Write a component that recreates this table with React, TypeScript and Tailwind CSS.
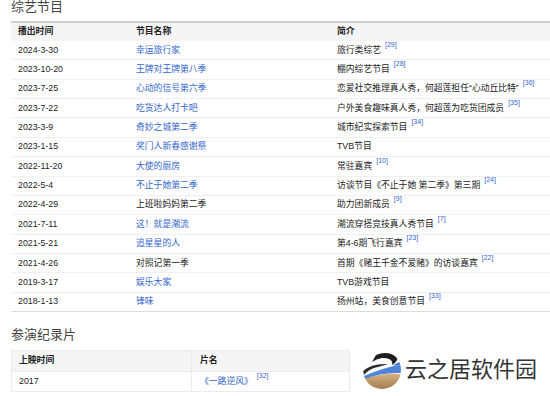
import React from "react";

const FONT = { fontFamily: '"Liberation Sans", "Noto Sans CJK SC", sans-serif' };

type Show = { date: string; name: string; link: boolean; note: string; ref?: string };

const shows: Show[] = [
  { date: "2024-3-30", name: "幸运旅行家", link: true, note: "旅行类综艺", ref: "29" },
  { date: "2023-10-20", name: "王牌对王牌第八季", link: true, note: "棚内综艺节目", ref: "28" },
  { date: "2023-7-25", name: "心动的信号第六季", link: true, note: "恋爱社交推理真人秀，何超莲担任“心动丘比特”", ref: "36" },
  { date: "2023-7-22", name: "吃货达人打卡吧", link: true, note: "户外美食趣味真人秀，何超莲为吃货团成员", ref: "35" },
  { date: "2023-3-9", name: "奇妙之城第二季", link: true, note: "城市纪实探索节目", ref: "34" },
  { date: "2023-1-15", name: "奖门人新春感谢祭", link: true, note: "TVB节目" },
  { date: "2022-11-20", name: "大使的厨房", link: true, note: "常驻嘉宾", ref: "10" },
  { date: "2022-5-4", name: "不止于她第二季", link: true, note: "访谈节目《不止于她 第二季》第三期", ref: "24" },
  { date: "2022-4-29", name: "上班啦妈妈第二季", link: false, note: "助力团新成员", ref: "9" },
  { date: "2021-7-11", name: "这！就是潮流", link: true, note: "潮流穿搭竞技真人秀节目", ref: "7" },
  { date: "2021-5-21", name: "追星星的人", link: true, note: "第4-6期飞行嘉宾", ref: "23" },
  { date: "2021-4-26", name: "对照记第一季", link: false, note: "首期《赌王千金不爱赌》的访谈嘉宾", ref: "22" },
  { date: "2019-3-17", name: "娱乐大家", link: true, note: "TVB游戏节目" },
  { date: "2018-1-13", name: "锋味", link: true, note: "扬州站，美食创意节目", ref: "33" },
];

function Ref({ n }: { n: string }) {
  return <sup className="ml-[4px] relative -top-[3px] text-[7px] text-[#36c] align-top leading-none">[{n}]</sup>;
}

function Logo() {
  return (
    <svg width="40" height="42" viewBox="0 0 40 42">
      <defs>
        <clipPath id="ball">
          <circle cx="20" cy="21" r="19" />
        </clipPath>
        <linearGradient id="tan" x1="0" y1="0" x2="0" y2="1">
          <stop offset="0" stopColor="#d6b283" />
          <stop offset="1" stopColor="#9a7446" />
        </linearGradient>
      </defs>
      <g clipPath="url(#ball)">
        <path d="M0 30 Q18 24 40 25 L40 42 L0 42 Z" fill="url(#tan)" />
        <path d="M2 27 Q20 19 40 15 L40 24 Q20 23 2 30 Z" fill="#4f84d6" />
        <path d="M14 6 Q26 1 36 9 Q34 14 30 16 Q32 9 20 9 Q14 10 10 13 Z" fill="#1e1e1e" />
        <path d="M1 22 Q10 14 26 15 Q20 17 12 19 Q6 21 2 26 Z" fill="#2a2a2a" />
        <path d="M30 16 Q38 14 40 10 L40 15 Q34 17 30 16 Z" fill="#3a6fc4" />
      </g>
    </svg>
  );
}

export default function App() {
  return (
    <div className="relative w-[550px] h-[396px] overflow-hidden bg-white pl-[11px] text-[#222]" style={FONT}>
      <div className="h-[21px] text-[13px] leading-[13px] text-[#444]">综艺节目</div>

      <div className="border-t-2 border-[#cfcfcf] text-[8.8px]">
        <div className="grid grid-cols-[118px_201px_1fr] h-[18px] items-center bg-[#f5f5f5] font-bold">
          <div className="pl-[7px]">播出时间</div>
          <div className="pl-[7px]">节目名称</div>
          <div className="pl-[7px]">简介</div>
        </div>
        {shows.map((s, i) => (
          <div
            key={s.date + s.name}
            className={`grid grid-cols-[118px_201px_1fr] h-[19.36px] items-center border-b ${
              i === shows.length - 1 ? "border-[#dcdcdc]" : "border-[#f0f0f0]"
            }`}
          >
            <div className="pl-[7px]">{s.date}</div>
            <div className={`pl-[7px] ${s.link ? "text-[#36c]" : ""}`}>{s.name}</div>
            <div className="pl-[7px] whitespace-nowrap">
              {s.note}
              {s.ref && <Ref n={s.ref} />}
            </div>
          </div>
        ))}
      </div>

      <div className="h-[38px] pt-[16px] text-[13px] leading-[14px] text-[#444]">参演纪录片</div>

      <div className="w-[339px] border border-[#ececec] text-[8.8px]">
        <div className="grid grid-cols-[180px_1fr] h-[21px] items-center bg-[#f5f5f5] font-bold border-b border-[#ececec]">
          <div className="pl-[7px] h-full flex items-center border-r border-[#ececec]">上映时间</div>
          <div className="pl-[8px]">片名</div>
        </div>
        <div className="grid grid-cols-[180px_1fr] h-[19px] items-center">
          <div className="pl-[7px] h-full flex items-center border-r border-[#ececec]">2017</div>
          <div className="pl-[8px] text-[#36c]">
            《一路逆风》
            <Ref n="32" />
          </div>
        </div>
      </div>

      <div className="absolute left-[362px] top-[349px] flex items-center gap-[3px]">
        <Logo />
        <span className="text-[22px] leading-none text-[#333]">云之居软件园</span>
      </div>
    </div>
  );
}
